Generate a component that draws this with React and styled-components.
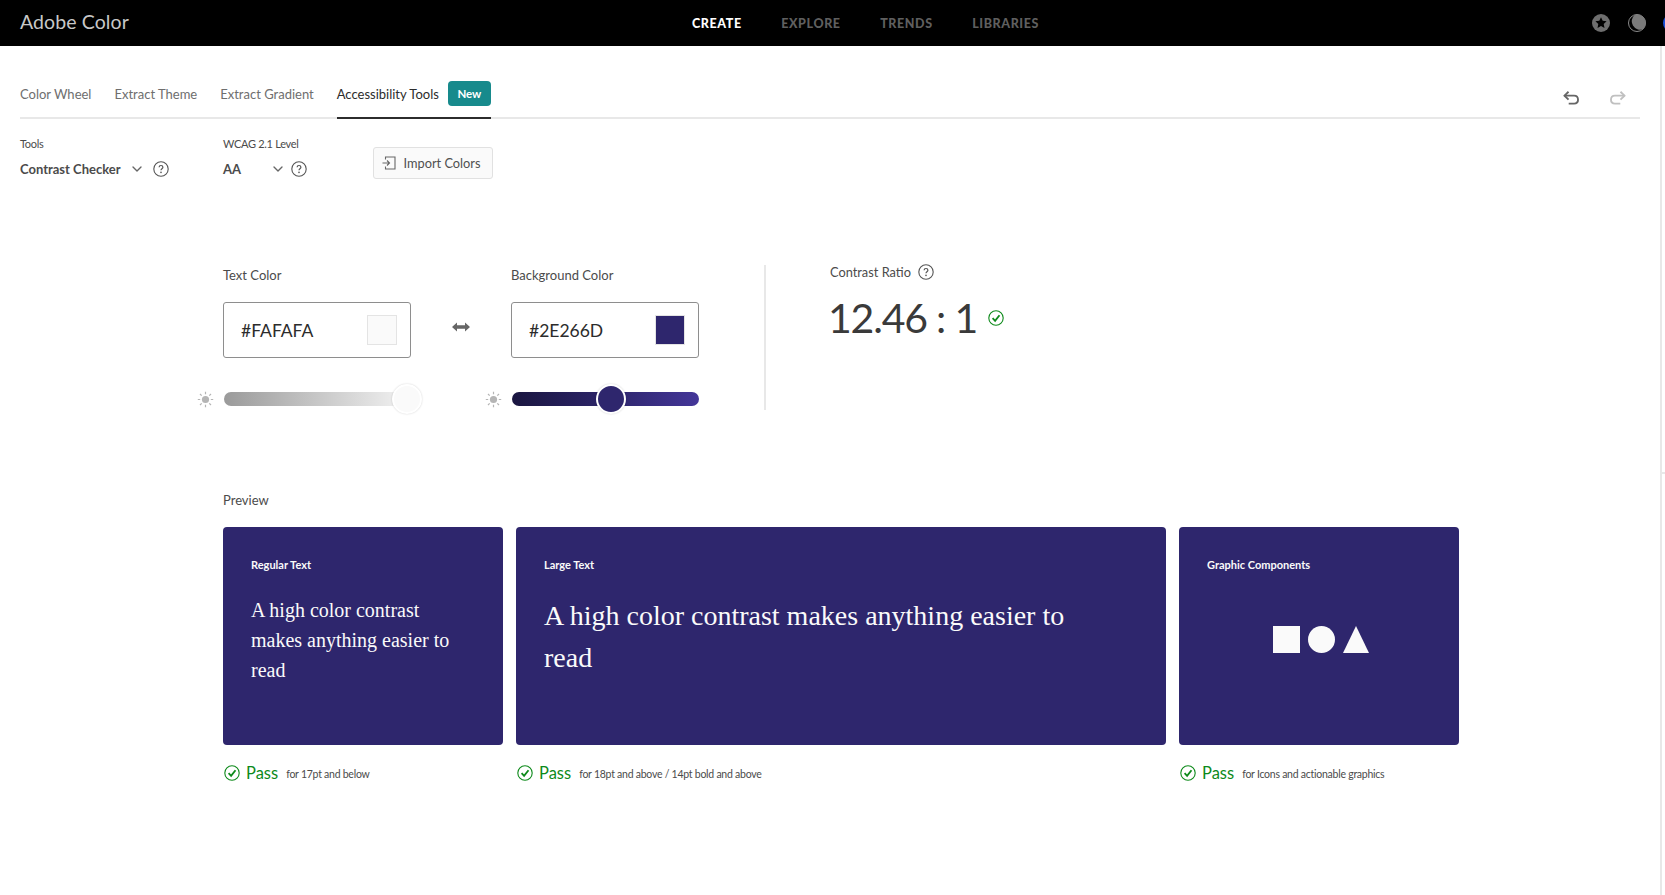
import styled, { createGlobalStyle } from 'styled-components'
import { ChevronDown } from 'lucide-react'

const GlobalStyle = createGlobalStyle`
    html, body {
        margin: 0;
        padding: 0;
        background: #fff;
        font-family: "Lato", "Noto Sans", sans-serif;
        color: #4b4b4b;
    }
`

const Page = styled.div`
    width: 1665px;
    height: 895px;
    overflow: hidden;
    display: flex;
    flex-direction: column;
`

// barra preta
const TopBar = styled.header`
    height: 46px;
    flex: none;
    background: #000;
    display: grid;
    grid-template-columns: 672px auto 1fr;
    align-items: center;
    padding-left: 20px;
`
const Logo = styled.span`
    font-size: 19.5px;
    color: #c8c8c8;
    letter-spacing: 0.1px;
    padding-bottom: 3px;
`
const TopNav = styled.nav`
    display: flex;
    gap: 39.5px;
`
const TopLink = styled.span`
    font-size: 12.5px;
    font-weight: 900;
    letter-spacing: 0.6px;
    color: ${p => (p.$active ? '#fff' : '#5f5f5f')};
`
const TopIcons = styled.div`
    display: flex;
    justify-content: flex-end;
    align-items: center;
    gap: 18px;
`
const Avatar = styled.div`
    width: 18px;
    height: 18px;
    flex: none;
    border-radius: 50%;
    margin-left: -1px;
    margin-right: -16px;
    background: #1a50d8;
`

const Main = styled.main`
    position: relative;
    flex: 1;
    padding: 0 20px;
    border-right: 2px solid #e8e8e8;
    margin-right: 3px;

    &::after {
        content: "";
        position: absolute;
        right: -5px;
        top: 426px;
        width: 3px;
        height: 2px;
        background: #e8e8e8;
    }
`

// abas
const TabsRow = styled.div`
    height: 73px;
    box-sizing: border-box;
    display: flex;
    align-items: flex-end;
    border-bottom: 2px solid #e8e8e8;
`
const Tab = styled.div`
    height: 100%;
    display: flex;
    align-items: center;
    gap: 9px;
    margin-right: 23px;
    padding-top: 22px;
    box-sizing: border-box;
    font-size: 13px;
    margin-bottom: -2px;
    border-bottom: 2px solid ${p => (p.$active ? '#2c2c2c' : 'transparent')};
    color: ${p => (p.$active ? '#2c2c2c' : '#6e6e6e')};
`
const Badge = styled.span`
    width: 43px;
    height: 25px;
    border-radius: 4px;
    background: #178a8c;
    color: #fff;
    font-size: 11.5px;
    font-weight: 700;
    display: flex;
    align-items: center;
    justify-content: center;
`
const History = styled.div`
    margin-left: auto;
    display: flex;
    gap: 29px;
    padding-bottom: 12px;
    padding-right: 14px;
`

// ferramentas
const ToolsRow = styled.div`
    display: flex;
    height: 146px;
    padding-top: 17px;
    box-sizing: border-box;
`
const ToolField = styled.div`
    width: ${p => p.$width}px;
    flex: none;
`
const FieldLabel = styled.div`
    font-size: 11px;
    line-height: 16px;
    letter-spacing: -0.3px;
    color: #4b4b4b;
`
const FieldValue = styled.div`
    margin-top: 8px;
    display: flex;
    align-items: center;
    font-size: 13px;
    font-weight: 700;
    line-height: 18px;
    color: #4b4b4b;
`
const ValueText = styled.span`
    width: ${p => p.$width}px;
    white-space: nowrap;
`
const ImportButton = styled.button`
    align-self: flex-start;
    margin-top: 11px;
    width: 120px;
    height: 32px;
    box-sizing: border-box;
    border: 1px solid #e1e1e1;
    border-radius: 3px;
    background: #fafafa;
    color: #505050;
    font: inherit;
    font-size: 12.8px;
    display: flex;
    align-items: center;
    justify-content: center;
    gap: 7px;
    padding: 0 3px 0 0;
`

const Content = styled.div`
    margin-left: 203px;
    width: 1236px;
`

// seletor de cores
const ColorsRow = styled.section`
    display: flex;
    height: 145px;
`
const ColorColumn = styled.div`
    width: 188px;
    flex: none;
`
const ColorLabel = styled.div`
    font-size: 13px;
    line-height: 20px;
    color: #4b4b4b;
`
const ColorInput = styled.div`
    margin-top: 17px;
    height: 56px;
    box-sizing: border-box;
    border: 1px solid #8e8e8e;
    border-radius: 3px;
    padding: 0 13px 0 17px;
    display: flex;
    align-items: center;
    justify-content: space-between;
    font-size: 17.5px;
    color: #2c2c2c;
`
const Swatch = styled.span`
    width: 30px;
    height: 30px;
    box-sizing: border-box;
    border: 1px solid #e4e4e4;
    background: ${p => p.$color};
`
const SliderRow = styled.div`
    position: relative;
    margin: 34px 0 0 1px;
    height: 14px;
    border-radius: 7px;
    background: ${p => p.$track};
`
const SliderSun = styled.span`
    position: absolute;
    left: -27px;
    top: -1px;
    display: flex;
`
const Thumb = styled.span`
    position: absolute;
    top: 50%;
    left: ${p => p.$at}px;
    width: 26px;
    height: 26px;
    border-radius: 50%;
    border: 2px solid #fff;
    box-shadow: 0 0 2px rgba(0, 0, 0, 0.18);
    transform: translate(-50%, -50%);
    background: ${p => p.$color};
`
const SwapBox = styled.div`
    width: 100px;
    flex: none;
    display: flex;
    justify-content: center;
    padding-top: 57px;
    box-sizing: border-box;
`
const RatioBox = styled.div`
    margin-left: 65px;
    border-left: 2px solid #e8e8e8;
    padding-left: 64px;
    height: 145px;
    box-sizing: border-box;
`
const RatioLabel = styled.div`
    display: flex;
    align-items: center;
    gap: 7px;
    margin-top: -3px;
    font-size: 12.8px;
    line-height: 20px;
    color: #4b4b4b;
`
const RatioValue = styled.div`
    display: flex;
    align-items: center;
    gap: 11px;
    margin-top: 10px;
    margin-left: -2px;
    font-size: 41px;
    letter-spacing: -1.2px;
    line-height: 52px;
    font-weight: 400;
    color: #3a3a3a;
`

// preview
const PreviewLabel = styled.div`
    margin-top: 80px;
    font-size: 13px;
    line-height: 20px;
    color: #4b4b4b;
`
const CardsGrid = styled.section`
    margin-top: 17px;
    display: grid;
    grid-template-columns: 280px 650px 280px;
    column-gap: 13px;
`
const Card = styled.div`
    height: 218px;
    box-sizing: border-box;
    border-radius: 4px;
    background: #2e266d;
    padding: 30px 28px;
    color: #fafafa;
`
const CardTitle = styled.div`
    font-size: 11px;
    line-height: 16px;
    font-weight: 700;
`
const SampleText = styled.p`
    margin: 22px 0 0;
    max-width: ${p => (p.$large ? '530px' : '210px')};
    font-family: "Liberation Serif", serif;
    font-size: ${p => (p.$large ? '28px' : '20px')};
    line-height: ${p => (p.$large ? '42px' : '30px')};
`
const Shapes = styled.div`
    display: flex;
    justify-content: center;
    margin: 52px 0 0 4px;
`
const PassRow = styled.div`
    display: flex;
    align-items: center;
    margin: 18px 0 0 1px;
    height: 20px;
`
const PassWord = styled.span`
    margin-left: 6px;
    margin-right: 8px;
    font-size: 16.5px;
    color: #0d8a1a;
`
const PassNote = styled.span`
    font-size: 10.5px;
    letter-spacing: -0.25px;
    padding-top: 1px;
    color: #4b4b4b;
`

const Help = ({ size = 16 }) => (
    <svg width={size} height={size} viewBox="0 0 16 16" fill="none">
        <circle cx="8" cy="8" r="7.2" stroke="#555" strokeWidth="1.1" />
        <path d="M6.1 6.3c0-1.1.9-1.8 1.9-1.8s1.9.7 1.9 1.7c0 1.5-1.9 1.5-1.9 3" stroke="#555" strokeWidth="1.2" fill="none" />
        <circle cx="8" cy="11.4" r=".8" fill="#555" />
    </svg>
)

const Check = ({ size = 16 }) => (
    <svg width={size} height={size} viewBox="0 0 16 16" fill="none">
        <circle cx="8" cy="8" r="7.2" stroke="#0d8a1a" strokeWidth="1.1" />
        <path d="M4.6 8.2 7.1 10.9 11.5 5.2" stroke="#0d8a1a" strokeWidth="1.8" fill="none" />
    </svg>
)

const Sun = () => (
    <svg width="17" height="17" viewBox="0 0 17 17" fill="none">
        <circle cx="8.5" cy="8.5" r="3.6" fill="#b5b5b5" />
        <path d="M8.5 0.8v2.4M8.5 13.8v2.4M0.8 8.5h2.4M13.8 8.5h2.4M3 3l1.7 1.7M12.3 12.3 14 14M3 14l1.7-1.7M12.3 4.7 14 3" stroke="#b5b5b5" strokeWidth="1.2" />
    </svg>
)

const UndoIcon = ({ color, flip }) => (
    <svg width="17" height="14" viewBox="0 0 18 15" fill="none" style={flip ? { transform: 'scaleX(-1)' } : undefined}>
        <path d="M1.5 5h10.2c2.4 0 4.3 1.800 4.300 4.500s-1.900 4-4.300 4H6" stroke={color} strokeWidth="2" fill="none" />
        <path d="M5.800 .8 1.500 5l4.300 4.200" stroke={color} strokeWidth="2" fill="none" />
    </svg>
)

const SliderBlock = ({ track, thumb, at }) => (
    <SliderRow $track={track}>
        <SliderSun><Sun /></SliderSun>
        <Thumb $at={at} $color={thumb} />
    </SliderRow>
)

const App = () => {
    return (
        <Page>
            <GlobalStyle />
            <TopBar>
                <Logo>Adobe Color</Logo>
                <TopNav>
                    <TopLink $active>CREATE</TopLink>
                    <TopLink>EXPLORE</TopLink>
                    <TopLink>TRENDS</TopLink>
                    <TopLink>LIBRARIES</TopLink>
                </TopNav>
                <TopIcons>
                    <svg width="18" height="18" viewBox="0 0 18 18">
                        <circle cx="9" cy="9" r="9" fill="#6e6e6e" />
                        <path d="M9 3.200l1.700 3.600 3.900.5-2.900 2.700.8 3.900L9 12l-3.500 1.900.8-3.900-2.900-2.700 3.900-.5z" fill="#000" />
                    </svg>
                    <svg width="18" height="18" viewBox="0 0 18 18">
                        <circle cx="9" cy="9" r="8.500" fill="#000" stroke="#8a8a8a" />
                        <path d="M6.500 .9A8.500 8.500 0 0 1 15 15.200 8.500 8.500 0 0 1 6.500 .9z" fill="#7a7a7a" />
                    </svg>
                    <Avatar />
                </TopIcons>
            </TopBar>
            <Main>
                <TabsRow>
                    <Tab>Color Wheel</Tab>
                    <Tab>Extract Theme</Tab>
                    <Tab>Extract Gradient</Tab>
                    <Tab $active>Accessibility Tools<Badge>New</Badge></Tab>
                    <History>
                        <UndoIcon color="#666" />
                        <UndoIcon color="#c0c0c0" flip />
                    </History>
                </TabsRow>
                <ToolsRow>
                    <ToolField $width={203}>
                        <FieldLabel>Tools</FieldLabel>
                        <FieldValue>
                            <ValueText>Contrast Checker</ValueText>
                            <ChevronDown size={16} color="#666" style={{ margin: '0 8px' }} />
                            <Help />
                        </FieldValue>
                    </ToolField>
                    <ToolField $width={150}>
                        <FieldLabel>WCAG 2.1 Level</FieldLabel>
                        <FieldValue>
                            <ValueText $width={47}>AA</ValueText>
                            <ChevronDown size={16} color="#666" style={{ marginRight: 5 }} />
                            <Help />
                        </FieldValue>
                    </ToolField>
                    <ImportButton>
                        <svg width="14" height="14" viewBox="0 0 14 14" fill="none">
                            <path d="M3.500 3.500V1h9.500v12H3.500v-2.500" stroke="#666" strokeWidth="1.100" />
                            <path d="M0.500 7h7M5 4.500 7.500 7 5 9.500" stroke="#666" strokeWidth="1.100" />
                        </svg>
                        Import Colors
                    </ImportButton>
                </ToolsRow>
                <Content>
                    <ColorsRow>
                        <ColorColumn>
                            <ColorLabel>Text Color</ColorLabel>
                            <ColorInput>#FAFAFA<Swatch $color="#fafafa" /></ColorInput>
                            <SliderBlock track="linear-gradient(90deg, #9a9a9a, #f4f4f4)" thumb="#fafafa" at={183} />
                        </ColorColumn>
                        <SwapBox>
                            <svg width="18" height="10" viewBox="0 0 18 10">
                                <path d="M0 5 5 .5V3.300h8V.5L18 5l-5 4.500V6.700H5v2.800z" fill="#666" />
                            </svg>
                        </SwapBox>
                        <ColorColumn>
                            <ColorLabel>Background Color</ColorLabel>
                            <ColorInput>#2E266D<Swatch $color="#2e266d" /></ColorInput>
                            <SliderBlock track="linear-gradient(90deg, #1a1640, #2e266d 55%, #443699)" thumb="#2e266d" at={99} />
                        </ColorColumn>
                        <RatioBox>
                            <RatioLabel>Contrast Ratio<Help /></RatioLabel>
                            <RatioValue>12.46 : 1<Check /></RatioValue>
                        </RatioBox>
                    </ColorsRow>
                    <PreviewLabel>Preview</PreviewLabel>
                    <CardsGrid>
                        <div>
                            <Card>
                                <CardTitle>Regular Text</CardTitle>
                                <SampleText>A high color contrast makes anything easier to read</SampleText>
                            </Card>
                            <PassRow>
                                <Check />
                                <PassWord>Pass</PassWord>
                                <PassNote>for 17pt and below</PassNote>
                            </PassRow>
                        </div>
                        <div>
                            <Card>
                                <CardTitle>Large Text</CardTitle>
                                <SampleText $large>A high color contrast makes anything easier to read</SampleText>
                            </Card>
                            <PassRow>
                                <Check />
                                <PassWord>Pass</PassWord>
                                <PassNote>for 18pt and above / 14pt bold and above</PassNote>
                            </PassRow>
                        </div>
                        <div>
                            <Card>
                                <CardTitle>Graphic Components</CardTitle>
                                <Shapes>
                                    <svg width="96" height="28" viewBox="0 0 96 28">
                                        <rect x="0" y="1" width="27" height="27" fill="#fafafa" />
                                        <circle cx="48.500" cy="14.500" r="13.500" fill="#fafafa" />
                                        <path d="M83 1 96 28H70z" fill="#fafafa" />
                                    </svg>
                                </Shapes>
                            </Card>
                            <PassRow>
                                <Check />
                                <PassWord>Pass</PassWord>
                                <PassNote>for Icons and actionable graphics</PassNote>
                            </PassRow>
                        </div>
                    </CardsGrid>
                </Content>
            </Main>
        </Page>
    )
}

export default App
